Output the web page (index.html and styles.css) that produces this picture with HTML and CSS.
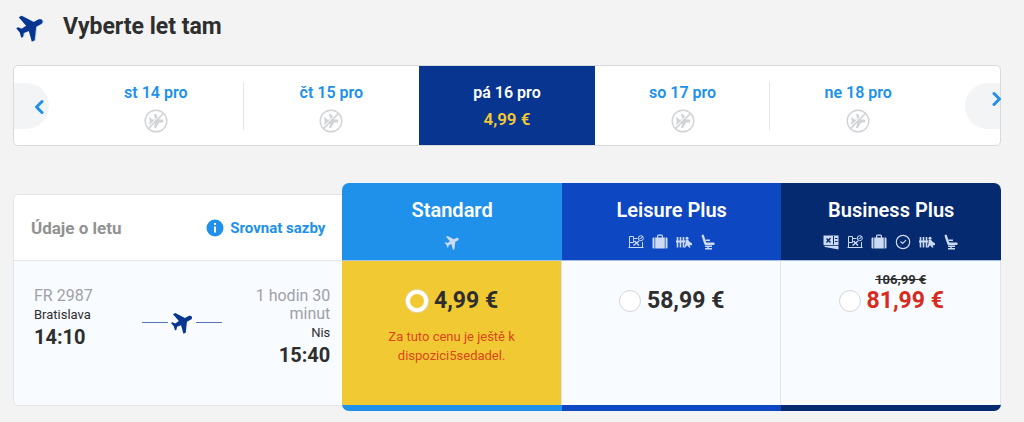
FILE: index.html
```html
<!DOCTYPE html>
<html lang="cs">
<head>
<meta charset="utf-8">
<title>Vyberte let tam</title>
<link rel="stylesheet" href="styles.css">
</head>
<body>
<svg class="defs" aria-hidden="true">
  <symbol id="plane" viewBox="0 0 28 28">
    <path transform="rotate(-28 14 14) translate(2 2)" d="M25 12c0-1.400-1.200-2.500-3-2.500h-4.800L10-1H7l2.300 10.300L4.300 9.800 2 7H.1l1.100 5-1.100 5H2l2.300-2.800 5 .5L7 25h3l7.200-10.500H22c1.800 0 3-1.100 3-2.500z"/>
  </symbol>
  <symbol id="no-flight" viewBox="0 0 24 24">
    <circle cx="12" cy="12" r="10.800" fill="none" stroke="currentColor" stroke-width="1.400"/>
    <path d="M19.500 12c0-1-.8-1.500-1.800-1.500h-2.500L12 5h-2l1.300 5.500H8L6.600 8.500H5l.8 3.500-.8 3.500h1.600L8 13.500h3.300L10 19h2l3.200-5.500h2.500c1 0 1.800-.5 1.800-1.500z" fill="currentColor"/>
    <path d="M4.600 17.800 17.800 4.600" stroke="#fff" stroke-width="1.200"/>
    <path d="M4.400 19.600 19.600 4.400" stroke="currentColor" stroke-width="1.500"/>
  </symbol>
  <symbol id="reserved" viewBox="0 0 16 16">
    <path d="M1.500 2.500h4v6h-4zM5.500 4.500h4M.5 13.500h15M1.500 8.500v5M14.500 8v5" fill="none" stroke="currentColor"/>
    <path d="m6.500 7 4.500 4.500M11 7l-5.500 4.500" stroke="currentColor" stroke-width="1.500"/>
    <circle cx="12.800" cy="4.200" r="2.500" fill="none" stroke="currentColor"/>
    <path d="m11.500 4 1 1 2.500-3" fill="none" stroke="currentColor"/>
  </symbol>
  <symbol id="bag" viewBox="0 0 16 16">
    <path d="M1.500 3.500H2.500v11h-1A1 1 0 0 1 .5 13.500v-9a1 1 0 0 1 1-1zM3.200 3.500H5V2a1.500 1.500 0 0 1 1.500-1.500h3A1.500 1.500 0 0 1 11 2v1.500h1.800v11H3.200zM6.200 3.500h3.600V1.800H6.200zM13.500 3.500h1a1 1 0 0 1 1 1v9a1 1 0 0 1-1 1h-1z" fill="currentColor" fill-rule="evenodd"/>
  </symbol>
  <symbol id="priority" viewBox="0 0 16 16">
    <path d="M1.500 3v10.500M4.500 3v10.500M7.500 3v10.500" stroke="currentColor" stroke-width="1.600"/>
    <path d="M0 7.500h9" stroke="currentColor" stroke-width="2"/>
    <circle cx="11" cy="4.200" r="1.500" fill="currentColor"/>
    <path d="m9.500 6 2.500-.3 1.500 2 2.500 1.500v2h-2.500l1 2.300H13l-2-2.300-1.500 2.300H8l1.500-4z" fill="currentColor"/>
  </symbol>
  <symbol id="seat" viewBox="0 0 16 16">
    <path d="M2.800 1.800 5.500 9.800h8" fill="none" stroke="currentColor" stroke-width="2.400" stroke-linecap="round" stroke-linejoin="round"/>
    <path d="M5.500 6.200h4.500M5 12.200h7M8 12v2.500M5 14.700h7" fill="none" stroke="currentColor" stroke-width="1.400"/>
  </symbol>
  <symbol id="pass" viewBox="0 0 16 16">
    <path d="M.5 1.500h15v9.500H.5zM1 11.800h14.500v3.700L2 13z" fill="currentColor"/>
    <path d="m3.500 4.500 4 4M7.500 4 3.500 8.500" stroke="#052a70" stroke-width="1.400"/>
    <path d="M10.500 2v8.500M12 4.500h2.500M12 7.500h2.500" stroke="#052a70"/>
  </symbol>
  <symbol id="clock" viewBox="0 0 16 16">
    <circle cx="8" cy="8" r="6.700" fill="none" stroke="currentColor" stroke-width="1.200"/>
    <path d="m5.500 7.500 2.200 2 3.300-3.300" fill="none" stroke="currentColor" stroke-width="1.200"/>
  </symbol>
</svg>

<main class="page">
  <header class="heading">
    <svg class="heading-plane"><use href="#plane"/></svg>
    <h1>Vyberte let tam</h1>
  </header>

  <nav class="dates" aria-label="Datum letu">
    <div class="side side-prev">
      <button class="arrow" type="button" aria-label="Předchozí"><svg viewBox="0 0 10 16"><path d="M8 2.500 2.500 8 8 13.500"/></svg></button>
    </div>
    <button class="date ruled" type="button"><span>st 14 pro</span><svg class="none"><use href="#no-flight"/></svg></button>
    <button class="date" type="button"><span>čt 15 pro</span><svg class="none"><use href="#no-flight"/></svg></button>
    <button class="date selected" type="button"><span>pá 16 pro</span><span class="date-price">4,99 €</span></button>
    <button class="date ruled" type="button"><span>so 17 pro</span><svg class="none"><use href="#no-flight"/></svg></button>
    <button class="date" type="button"><span>ne 18 pro</span><svg class="none"><use href="#no-flight"/></svg></button>
    <div class="side side-next">
      <button class="arrow" type="button" aria-label="Další"><svg viewBox="0 0 10 16"><path d="M2 2.500 7.500 8 2 13.500"/></svg></button>
    </div>
  </nav>

  <section class="fares">
    <div class="flight">
      <div class="flight-head">
        <h2>Údaje o letu</h2>
        <a class="compare" href="#"><svg viewBox="0 0 18 18"><circle cx="9" cy="9" r="8.500" fill="#2091eb"/><path d="M9 7.500v6M9 4v2" stroke="#fff" stroke-width="2"/></svg>Srovnat sazby</a>
      </div>
      <div class="flight-body">
        <div class="stop">
          <span class="muted">FR 2987</span>
          <span class="city">Bratislava</span>
          <span class="time">14:10</span>
        </div>
        <div class="route"><i></i><svg><use href="#plane"/></svg><i></i></div>
        <div class="stop arrival">
          <span class="muted">1 hodin 30 minut</span>
          <span class="city">Nis</span>
          <span class="time">15:40</span>
        </div>
      </div>
    </div>

    <div class="fare standard chosen">
      <div class="fare-head">
        <h3>Standard</h3>
        <div class="perks"><svg><use href="#plane"/></svg></div>
      </div>
      <div class="fare-body">
        <span class="old"></span>
        <label class="price"><input type="radio" name="fare" checked>4,99 €</label>
        <p class="seats">Za tuto cenu je ještě k dispozici5sedadel.</p>
      </div>
    </div>

    <div class="fare leisure">
      <div class="fare-head">
        <h3>Leisure Plus</h3>
        <div class="perks"><svg><use href="#reserved"/></svg><svg><use href="#bag"/></svg><svg><use href="#priority"/></svg><svg><use href="#seat"/></svg></div>
      </div>
      <div class="fare-body">
        <span class="old"></span>
        <label class="price"><input type="radio" name="fare">58,99 €</label>
      </div>
    </div>

    <div class="fare business">
      <div class="fare-head">
        <h3>Business Plus</h3>
        <div class="perks"><svg><use href="#pass"/></svg><svg><use href="#reserved"/></svg><svg><use href="#bag"/></svg><svg><use href="#clock"/></svg><svg><use href="#priority"/></svg><svg><use href="#seat"/></svg></div>
      </div>
      <div class="fare-body">
        <s class="old">106,99 €</s>
        <label class="price reduced"><input type="radio" name="fare">81,99 €</label>
      </div>
    </div>
  </section>
</main>
</body>
</html>
```
FILE: styles.css
```css
* { box-sizing: border-box; }
body {
  margin: 0;
  background: #f3f3f3;
  color: #2e2e2e;
  font-family: Roboto, "Liberation Sans", sans-serif;
}
h1, h2, h3, p { margin: 0; }
button { font: inherit; border: 0; padding: 0; cursor: pointer; }
.defs { position: absolute; width: 0; height: 0; }

.page { padding: 11px 23px 11px 13px; }

.heading { display: flex; align-items: center; gap: 18px; height: 32px; padding-left: 2px; }
.heading-plane { width: 30px; height: 30px; fill: #073590; filter: drop-shadow(1px 0 0 #2091eb55); }
h1 { font-size: 23px; line-height: 32px; font-weight: 700; }

.dates {
  display: flex;
  margin-top: 22px;
  height: 81px;
  background: #fff;
  border: 1px solid #d8dade;
  border-radius: 5px;
}
.side { flex: 0 0 54px; display: flex; align-items: center; }
.side-next { justify-content: flex-end; }
.arrow {
  display: flex;
  align-items: center;
  justify-content: flex-end;
  width: 35px;
  height: 46px;
  padding: 2px 5px 0 0;
  background: #f3f4f6;
  border-radius: 0 23px 23px 0;
}
.side-next .arrow { padding: 0 0 14px; border-radius: 23px 0 0 23px; }
.side-next .arrow svg { margin-right: -2px; }
.arrow svg { width: 10px; height: 16px; flex: none; }
.arrow path { fill: none; stroke: #2091eb; stroke-width: 3; stroke-linecap: round; stroke-linejoin: round; }
.date {
  flex: 1 1 0;
  display: flex;
  flex-direction: column;
  align-items: center;
  padding-top: 17px;
  gap: 6px;
  background: none;
  color: #2091eb;
  font-size: 16px;
  line-height: 20px;
  font-weight: 600;
}
.date.ruled { background: linear-gradient(#e2e4e7, #e2e4e7) right center / 1px 48px no-repeat; }
.date.selected { background: #073590; color: #fff; }
.date-price { color: #f1c933; font-size: 17px; }
.none { width: 24px; height: 24px; color: #d0d3d7; }

.fares {
  display: grid;
  grid-template-columns: 3fr 2fr 2fr 2fr;
  margin-top: 37px;
}
.flight {
  display: flex;
  flex-direction: column;
  margin: 11px 0 5px;
  border: 1px solid #e2e6ea;
  border-right: 0;
  border-radius: 5px 0 0 5px;
  background: #f8fbff;
}
.flight-head {
  display: flex;
  align-items: center;
  justify-content: space-between;
  height: 66px;
  padding: 1px 17px 0;
  background: #fff;
  border-bottom: 1px solid #e2e6ea;
  border-radius: 5px 0 0;
}
h2 { font-size: 17px; font-weight: 700; color: #929292; }
.compare {
  display: flex;
  align-items: center;
  gap: 6px;
  color: #2091eb;
  font-size: 15px;
  font-weight: 700;
  text-decoration: none;
}
.compare svg { width: 18px; height: 18px; }
.flight-body {
  flex: 1;
  display: grid;
  grid-template-columns: 1fr 80px 1fr;
  align-items: start;
  padding: 26px 12px 0 20px;
}
.stop { display: flex; flex-direction: column; }
.arrival { align-items: flex-end; text-align: right; padding-left: 28px; }
.muted { font-size: 16px; line-height: 18px; color: #a0a0a9; }
.city { font-size: 13px; line-height: 20px; }
.time { font-size: 20px; line-height: 24px; font-weight: 700; }
.route { display: flex; align-items: center; gap: 2px; height: 26px; margin-top: 22px; }
.route i { flex: 1; height: 1px; background: #5573b5; }
.route svg { width: 24px; height: 24px; fill: #073590; }

.fare {
  --tone: #2091eb;
  display: flex;
  flex-direction: column;
  overflow: hidden;
  border-bottom: 6px solid var(--tone);
}
.standard { border-radius: 7px 0 0 7px; }
.leisure { --tone: #0d47c1; }
.business { --tone: #052a70; border-radius: 0 7px 7px 0; }
.fare-head {
  height: 78px;
  padding-top: 14px;
  background: var(--tone);
  border-bottom: 1px solid #a9bee5;
  color: #fff;
  text-align: center;
}
h3 { font-size: 20px; line-height: 26px; font-weight: 600; }
.perks { display: flex; justify-content: center; gap: 8px; margin-top: 11px; color: #cddaf4; fill: #cddaf4; }
.perks svg { width: 16px; height: 16px; }
.fare-body {
  display: flex;
  flex-direction: column;
  align-items: center;
  height: 144px;
  padding-top: 11px;
  background: #f8fbff;
  border-right: 1px solid #dfe4ec;
}
.chosen .fare-body { background: #f1c933; }
.old { height: 16px; font-size: 13px; line-height: 16px; font-weight: 700; padding-left: 20px; }
.price {
  display: flex;
  align-items: center;
  gap: 6px;
  padding-left: 1px;
  font-size: 23px;
  line-height: 26px;
  font-weight: 700;
}
.reduced { color: #d72b20; }
.price input {
  appearance: none;
  width: 22px;
  height: 22px;
  margin: 0;
  border: 1px solid #d4d6da;
  border-radius: 50%;
  background: #fff;
}
.price input:checked { border: 4px solid #fff; background: #f1c933; box-shadow: 0 0 0 1px #e2d7ab; }
.seats {
  width: 150px;
  margin-top: 13px;
  color: #d8471f;
  font-size: 13px;
  line-height: 19px;
  text-align: center;
}
```
